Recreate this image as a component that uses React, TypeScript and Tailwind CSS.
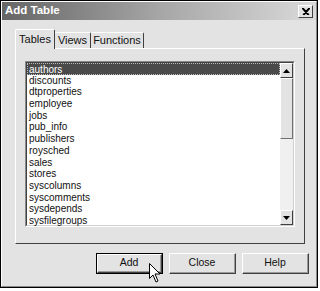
import React from "react";

const tables = [
  "authors",
  "discounts",
  "dtproperties",
  "employee",
  "jobs",
  "pub_info",
  "publishers",
  "roysched",
  "sales",
  "stores",
  "syscolumns",
  "syscomments",
  "sysdepends",
  "sysfilegroups",
];

function Btn({ label, isDefault }: { label: string; isDefault?: boolean }) {
  return (
    <div
      className={
        isDefault
          ? "w-[67px] h-[21px] border border-black"
          : "w-[67px] h-[21px]"
      }
    >
      <div className="w-full h-full border-t border-l border-t-white border-l-white border-r border-b border-r-[#404040] border-b-[#404040] bg-[#e3e3e3]">
        <div className="w-full h-full border-r border-b border-r-[#9a9a9a] border-b-[#9a9a9a] flex items-center justify-center text-[10.5px] text-[#111]">
          {label}
        </div>
      </div>
    </div>
  );
}

export default function App() {
  return (
    <div className="w-[320px] h-[291px] bg-white relative font-['Liberation_Sans',Arial,sans-serif]">
      <div className="w-[318px] h-[288px] border border-black bg-[#e3e3e3] flex flex-col">
        <div className="h-full border border-t-white border-l-white border-r-[#8a8a8a] border-b-[#8a8a8a] flex flex-col">
          {/* title bar */}
          <div className="h-[18px] bg-gradient-to-r from-[#666666] via-[#a6a6a6] to-[#dadada] flex items-center justify-between pl-[3px] pr-[3px]">
            <span className="text-[11.5px] font-bold text-white">Add Table</span>
            <div className="w-[15px] h-[13px] bg-[#e3e3e3] border border-t-white border-l-white border-r-[#404040] border-b-[#404040] flex items-center justify-center">
              <svg width="8" height="7" viewBox="0 0 8 7">
                <path d="M1 0 L7 7 M0 0 L6 7 M7 0 L1 7 M8 0 L2 7" stroke="#000" strokeWidth="1.2" />
              </svg>
            </div>
          </div>

          <div className="flex flex-col pl-[13px] pr-[11px] pt-[8px]">
            {/* tabs */}
            <div className="flex items-end h-[20px] relative z-10">
              <div className="h-[20px] w-[40px] bg-[#e3e3e3] border-t border-l border-t-white border-l-white border-r border-r-[#404040] rounded-t-[2px] flex items-center justify-center text-[11px] text-[#111] -mb-[1px] pb-[1px]">
                Tables
              </div>
              <div className="h-[16px] w-[36px] border-t border-t-white border-r border-r-[#404040] rounded-t-[2px] flex items-center justify-center text-[11px] text-[#111]">
                Views
              </div>
              <div className="h-[16px] w-[53px] border-t border-t-white border-r border-r-[#404040] rounded-t-[2px] flex items-center justify-center text-[11px] text-[#111]">
                Functions
              </div>
            </div>
            {/* panel */}
            <div className="h-[196px] w-[290px] border border-t-white border-l-white border-r-[#404040] border-b-[#404040] px-[9px] pt-[12px]">
              <div className="w-[270px] h-[166px] border border-t-[#8a8a8a] border-l-[#8a8a8a] border-r-white border-b-white">
                <div className="w-full h-full border border-t-[#404040] border-l-[#404040] border-r-[#d0d0d0] border-b-[#d0d0d0] bg-white flex">
                  <div className="flex-1 flex flex-col">
                    {tables.map((t, i) => (
                      <div
                        key={t}
                        className={
                          i === 0
                            ? "h-[11.7px] leading-[11px] pl-[1px] text-[10px] bg-[#4a4a4a] text-white border border-dotted border-[#bbbbbb]"
                            : "h-[11.7px] leading-[11.7px] pl-[2px] text-[10px] text-[#111]"
                        }
                      >
                        {t}
                      </div>
                    ))}
                  </div>
                  {/* scrollbar */}
                  <div className="w-[13px] h-full bg-[#f0f0f0] flex flex-col justify-between">
                    <div className="flex flex-col">
                      <div className="h-[15px] bg-[#e3e3e3] border border-t-white border-l-white border-r-[#404040] border-b-[#404040] flex items-center justify-center">
                        <svg width="7" height="4" viewBox="0 0 7 4">
                          <path d="M0 4 L3.5 0 L7 4 Z" fill="#000" />
                        </svg>
                      </div>
                      <div className="h-[61px] bg-[#e3e3e3] border border-t-white border-l-white border-r-[#707070] border-b-[#707070]" />
                    </div>
                    <div className="h-[15px] bg-[#e3e3e3] border border-t-white border-l-white border-r-[#404040] border-b-[#404040] flex items-center justify-center">
                      <svg width="7" height="4" viewBox="0 0 7 4">
                        <path d="M0 0 L7 0 L3.5 4 Z" fill="#000" />
                      </svg>
                    </div>
                  </div>
                </div>
              </div>
            </div>
            {/* buttons */}
            <div className="flex justify-end gap-[6px] mt-[9px] mr-[-4px]">
              <Btn label="Add" isDefault />
              <Btn label="Close" />
              <Btn label="Help" />
            </div>
          </div>
        </div>
      </div>
      {/* mouse pointer */}
      <svg className="absolute left-[149px] top-[263px]" width="12" height="20" viewBox="0 0 12 20">
        <path d="M0.5 0.5 L0.5 15.5 L4 12 L7 19 L9 18 L6 11 L11 11 Z" fill="#fff" stroke="#000" strokeWidth="1" />
      </svg>
    </div>
  );
}
